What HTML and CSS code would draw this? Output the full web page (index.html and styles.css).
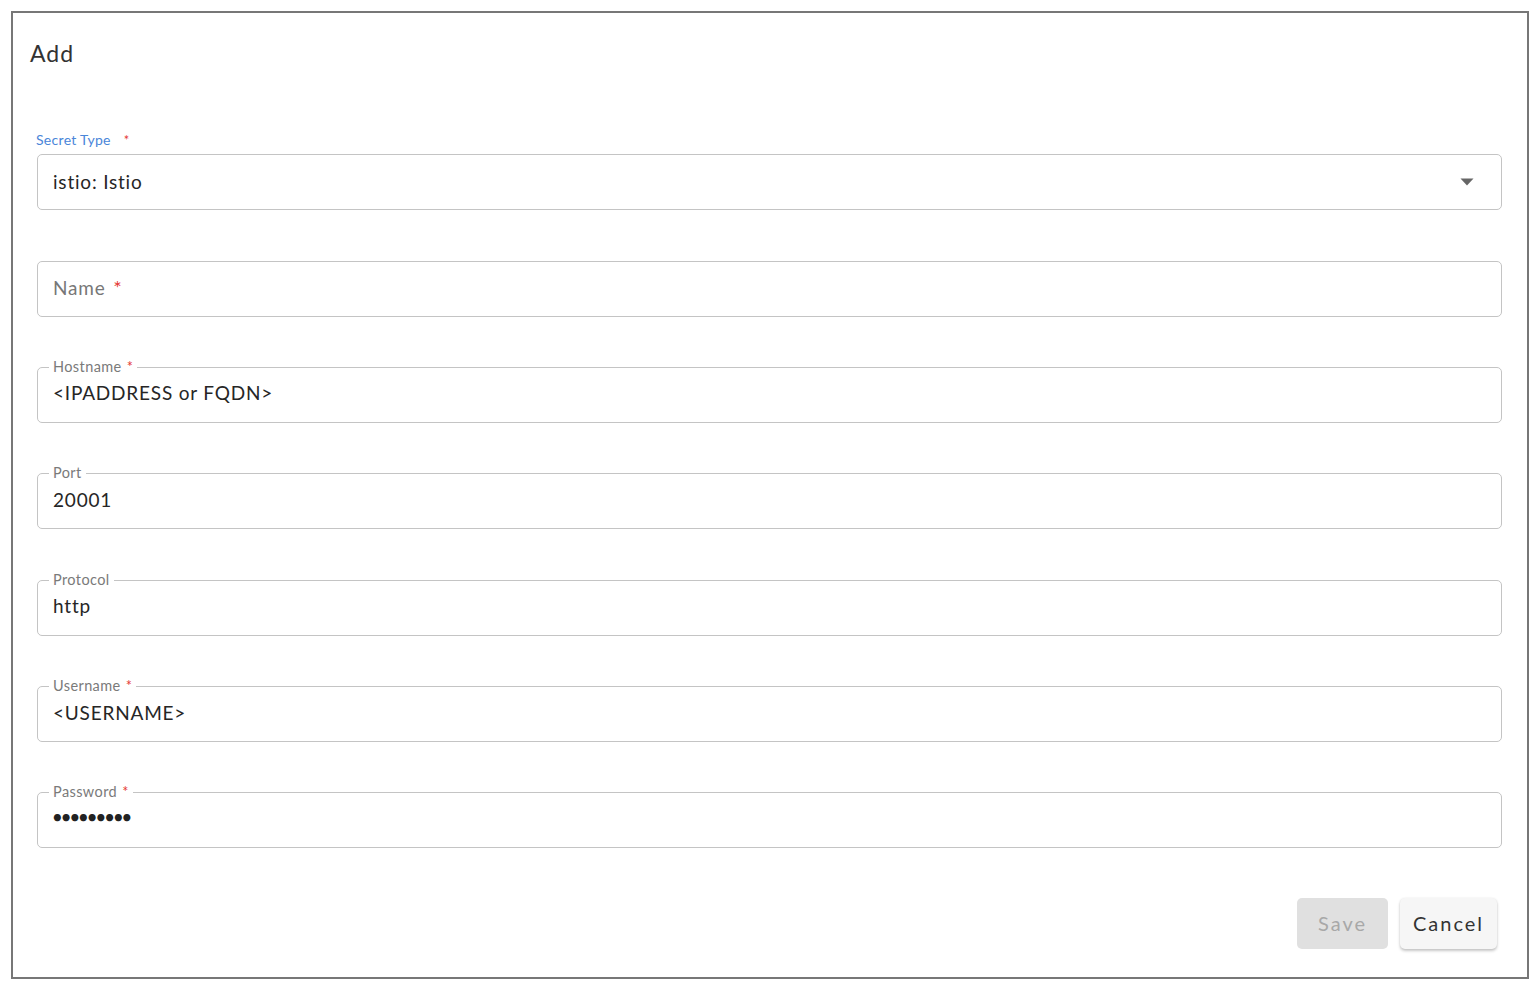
FILE: index.html
```html
<!DOCTYPE html>
<html lang="en">
<head>
<meta charset="utf-8">
<title>Add Secret</title>
<link rel="stylesheet" href="styles.css">
</head>
<body>
<div class="dialog">
  <h2 class="title">Add</h2>

  <div class="select-group">
    <div class="select-label">Secret Type <span class="req">*</span></div>
    <div class="select-box">
      <span class="value">istio: Istio</span>
      <svg class="caret" width="14" height="8" viewBox="0 0 14 8"><path d="M0.5 0.5 L13.5 0.5 L7 7.5 Z" fill="#666"/></svg>
    </div>
  </div>

  <div class="fields">
    <div class="field">
      <span class="placeholder">Name <span class="req">*</span></span>
    </div>
    <div class="field">
      <span class="legend">Hostname <span class="req">*</span></span>
      <span class="value">&lt;IPADDRESS or FQDN&gt;</span>
    </div>
    <div class="field">
      <span class="legend">Port</span>
      <span class="value">20001</span>
    </div>
    <div class="field">
      <span class="legend">Protocol</span>
      <span class="value">http</span>
    </div>
    <div class="field">
      <span class="legend">Username <span class="req">*</span></span>
      <span class="value">&lt;USERNAME&gt;</span>
    </div>
    <div class="field">
      <span class="legend">Password <span class="req">*</span></span>
      <span class="value dots">●●●●●●●●●</span>
    </div>
  </div>

  <div class="actions">
    <button class="btn btn-save" disabled>Save</button>
    <button class="btn btn-cancel">Cancel</button>
  </div>
</div>
</body>
</html>
```

FILE: styles.css
```css
* { box-sizing: border-box; }

html, body {
  margin: 0;
  padding: 0;
  background: #ffffff;
  font-family: Lato, "Noto Sans", "Liberation Sans", sans-serif;
  color: #222;
}

.dialog {
  margin: 11px 0 0 11px;
  width: 1518px;
  height: 968px;
  border: 2px solid #777777;
  padding: 25px 25px 0 24px;
  display: flex;
  flex-direction: column;
}

.title {
  margin: 0 0 0 -7px;
  font-size: 23px;
  line-height: 30px;
  font-weight: 400;
  letter-spacing: 1px;
  color: #333;
}

.select-group {
  margin-top: 64px;
  display: flex;
  flex-direction: column;
}

.select-label {
  font-size: 14px;
  line-height: 16px;
  letter-spacing: 0.3px;
  color: #4a86d9;
  margin-left: -1px;
}

.select-label .req {
  margin-left: 9px;
  color: #e53935;
  font-size: 13px;
}

.req { color: #e53935; }

.select-box {
  margin-top: 6px;
  height: 56px;
  border: 1.5px solid #c4c4c4;
  border-radius: 5px;
  display: flex;
  align-items: center;
  justify-content: space-between;
  padding: 0 27px 2px 15px;
}

.caret { display: block; margin-top: 2px; }

.value {
  font-size: 19px;
  letter-spacing: 0.8px;
  color: #262626;
}

.fields {
  margin-top: 50.5px;
  display: flex;
  flex-direction: column;
  gap: 50.4px;
}

.field {
  position: relative;
  height: 56px;
  border: 1.5px solid #c4c4c4;
  border-radius: 5px;
  display: flex;
  align-items: center;
  padding: 0 15px 4px;
}

.placeholder {
  font-size: 19px;
  letter-spacing: 0.8px;
  color: #777;
}

.placeholder .req { margin-left: 2px; font-size: 20px; }

.legend {
  position: absolute;
  top: -9px;
  left: 11px;
  padding: 0 4px;
  background: #fff;
  font-size: 14.5px;
  line-height: 16px;
  letter-spacing: 0.4px;
  color: #7a7a7a;
}

.legend .req { margin-left: 1px; }

.dots {
  font-size: 14.5px;
  letter-spacing: 0;
  color: #222;
  margin-top: -3px;
}

.actions {
  margin-top: 50px;
  display: flex;
  justify-content: flex-end;
  gap: 12px;
  padding-right: 5px;
}

.btn {
  font-family: Lato, "Noto Sans", "Liberation Sans", sans-serif;
  font-size: 20px;
  letter-spacing: 2px;
  height: 51px;
  border: none;
  border-radius: 5px;
  padding: 0 0 2px;
}

.btn-save {
  width: 91px;
  background: #e0e0e0;
  color: #a8a8a8;
}

.btn-cancel {
  width: 97px;
  background: #f6f6f6;
  color: #333;
  box-shadow: 0 2px 3px rgba(0,0,0,0.22), 0 0 2px rgba(0,0,0,0.08);
}
```
